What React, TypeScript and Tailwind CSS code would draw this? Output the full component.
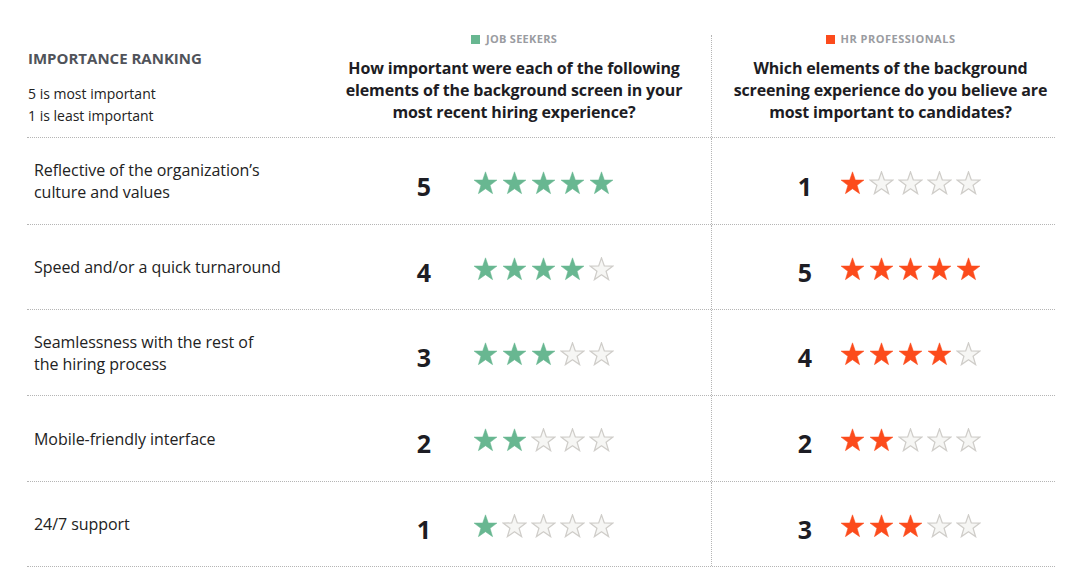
import React from "react";

const GREEN = "#68b791";
const ORANGE = "#fc4b1c";

function Star({ filled, color }: { filled: boolean; color: string }) {
  return (
    <svg width="25" height="24" viewBox="0 0 24 23" className="block">
      <path
        d="M12 0.8 L14.7 8.6 L23 8.7 L16.4 13.7 L18.8 21.7 L12 17 L5.2 21.7 L7.6 13.7 L1 8.7 L9.3 8.6 Z"
        fill={filled ? color : "#f6f6f4"}
        stroke={filled ? color : "#cfcdc9"}
        strokeWidth={filled ? 0.5 : 1.2}
        strokeLinejoin="miter"
      />
    </svg>
  );
}

function Stars({ n, color }: { n: number; color: string }) {
  return (
    <div className="flex gap-[4px]">
      {[0, 1, 2, 3, 4].map((i) => (
        <Star key={i} filled={i < n} color={color} />
      ))}
    </div>
  );
}

const rows = [
  { label: ["Reflective of the organization\u2019s", "culture and values"], js: 5, hr: 1, h: "h-[87px]" },
  { label: ["Speed and/or a quick turnaround"], js: 4, hr: 5, h: "h-[85px]" },
  { label: ["Seamlessness with the rest of", "the hiring process"], js: 3, hr: 4, h: "h-[86px]" },
  { label: ["Mobile-friendly interface"], js: 2, hr: 2, h: "h-[86px]" },
  { label: ["24/7 support"], js: 1, hr: 3, h: "h-[85px]" },
];

export default function App() {
  return (
    <div
      className="w-[1066px] h-[585px] bg-white overflow-hidden"
      style={{ fontFamily: '"Open Sans", "Noto Sans", sans-serif' }}
    >
      <div className="ml-[27px] w-[1028px]">
        {/* Header */}
        <div className="flex h-[138px] border-b border-dotted border-[#b5b5b5]">
          <div className="w-[300px] pl-[1px] pt-[48px]">
            <div className="text-[15px] font-bold text-[#50535a] leading-[20px]">
              IMPORTANCE RANKING
            </div>
            <div className="mt-[15px] text-[14px] text-[#222] leading-[22px]">5 is most important</div>
            <div className="text-[14px] text-[#222] leading-[22px]">1 is least important</div>
          </div>
          <div className="w-[384px] pr-[10px] pt-[31px] flex flex-col items-center">
            <div className="flex items-center gap-[6px] h-[16px]">
              <span className="w-[9px] h-[9px] bg-[#68b791]" />
              <span className="text-[11px] font-bold text-[#9a9ca1] tracking-[0.3px]">JOB SEEKERS</span>
            </div>
            <div className="mt-[10px] text-center text-[16px] font-bold text-[#1d1d24] leading-[22px] tracking-[-0.15px]">
              How important were each of the following
              <br />
              elements of the background screen in your
              <br />
              most recent hiring experience?
            </div>
          </div>
          <div className="w-[344px] mt-[35px] border-l border-dotted border-[#b5b5b5] pl-[14px] flex flex-col items-center">
            <div className="mt-[-4px] flex items-center gap-[6px] h-[16px]">
              <span className="w-[9px] h-[9px] bg-[#fc4b1c]" />
              <span className="text-[11px] font-bold text-[#9a9ca1] tracking-[0.5px]">HR PROFESSIONALS</span>
            </div>
            <div className="mt-[10px] text-center text-[16px] font-bold text-[#1d1d24] leading-[22px] tracking-[-0.15px]">
              Which elements of the background
              <br />
              screening experience do you believe are
              <br />
              most important to candidates?
            </div>
          </div>
        </div>
        {/* Rows */}
        {rows.map((r, i) => (
          <div key={i} className={`flex ${r.h} border-b border-dotted border-[#b5b5b5]`}>
            <div className="w-[300px] pl-[7px] flex flex-col justify-center">
              {r.label.map((l, j) => (
                <div key={j} className="text-[16px] text-[#222] leading-[22px] tracking-[-0.05px]">
                  {l}
                </div>
              ))}
            </div>
            <div className="w-[384px] flex items-center pl-[82px]">
              <div className="w-[30px] pt-[10px] text-center text-[25px] font-bold text-[#1d1d24] leading-none">
                {r.js}
              </div>
              <div className="ml-[34px] pt-[3px]">
                <Stars n={r.js} color={GREEN} />
              </div>
            </div>
            <div className="w-[344px] border-l border-dotted border-[#b5b5b5] flex items-center pl-[78px]">
              <div className="w-[30px] pt-[10px] text-center text-[25px] font-bold text-[#1d1d24] leading-none">
                {r.hr}
              </div>
              <div className="ml-[20px] pt-[3px]">
                <Stars n={r.hr} color={ORANGE} />
              </div>
            </div>
          </div>
        ))}
      </div>
    </div>
  );
}
